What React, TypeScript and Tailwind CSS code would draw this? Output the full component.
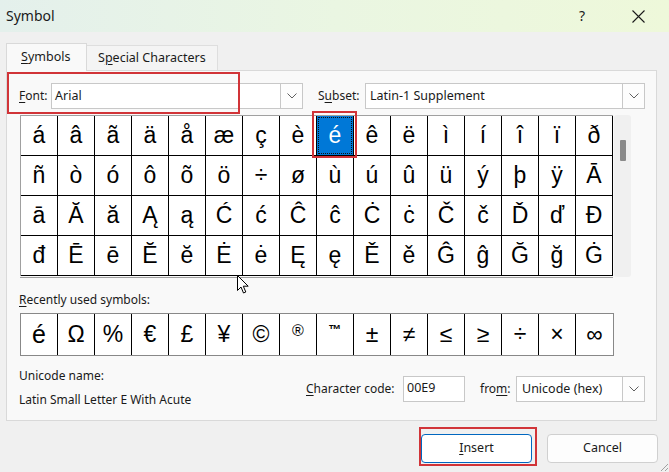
import React from "react";

const rows = [
  "áâãäåæçèéêëìíîïð",
  "ñòóôõö÷øùúûüýþÿĀ",
  "āĂăĄąĆćĈĉĊċČčĎďĐ",
  "đĒēĔĕĖėĘęĚěĜĝĞğĠ",
];

const recent = ["é", "Ω", "%", "€", "£", "¥", "©", "®", "™", "±", "≠", "≤", "≥", "÷", "×", "∞"];

function Chevron() {
  return (
    <svg width="10" height="6" viewBox="0 0 10 6">
      <path d="M0.5 0.5 L5 5 L9.5 0.5" fill="none" stroke="#606060" strokeWidth="1" />
    </svg>
  );
}

function DropBtn() {
  return (
    <div className="flex h-full w-[22px] items-center justify-center border-l border-[#c8c8c8] bg-[#fdfdfd]">
      <Chevron />
    </div>
  );
}

export default function App() {
  return (
    <div className="relative flex h-[472px] w-[669px] flex-col overflow-hidden bg-[#f0f0f0] font-[family-name:'Segoe_UI','Noto_Sans',sans-serif] text-[12px] text-[#1a1a1a]">
      {/* Title bar */}
      <div className="flex h-[32px] items-center bg-linear-to-r from-[#e4f0ec] via-[#eaf6e2] to-[#eef8da] pl-[6px]">
        <span className="text-[14px] leading-none">Symbol</span>
        <span className="ml-auto text-[14px] leading-none">?</span>
        <span className="ml-[47px] mr-[24px] flex items-center">
          <svg width="13" height="13" viewBox="0 0 13 13">
            <path d="M0.5 0.5 L12.5 12.5 M12.5 0.5 L0.5 12.5" stroke="#1a1a1a" strokeWidth="1.1" />
          </svg>
        </span>
      </div>

      {/* Tabs */}
      <div className="ml-[6px] mt-[11px] flex h-[27px] items-end">
        <div className="relative z-10 -mb-px flex h-[28px] w-[81px] items-center border border-b-0 border-[#d9d9d9] bg-[#f9f9f9] pl-[14px] text-[12.5px]">
          <span><span className="underline underline-offset-2">S</span>ymbols</span>
        </div>
        <div className="flex h-[25px] w-[131px] items-center border border-b-0 border-l-0 border-[#dedede] bg-[#f4f4f4] pl-[11px] text-[12.5px]">
          <span>S<span className="underline underline-offset-2">p</span>ecial Characters</span>
        </div>
      </div>

      {/* Panel */}
      <div className="ml-[6px] flex h-[351px] w-[651px] flex-col border border-[#d9d9d9] bg-[#f9f9f9]">
        {/* Font / Subset row */}
        <div className="relative mt-[12px] flex h-[26px] items-center">
          <div className="pointer-events-none absolute left-[0px] top-[-11px] h-[42px] w-[233px] border-2 border-[#d13438]" />
          <span className="ml-[12px] w-[32px]"><span className="underline underline-offset-2">F</span>ont:</span>
          <div className="flex h-[26px] w-[252px] items-center border border-[#c8c8c8] bg-white">
            <span className="flex-1 pl-[3px] text-[12.5px]">Arial</span>
            <DropBtn />
          </div>
          <span className="ml-[15px] w-[47px]">S<span className="underline underline-offset-2">u</span>bset:</span>
          <div className="flex h-[26px] w-[280px] items-center border border-[#c8c8c8] bg-white">
            <span className="flex-1 pl-[4px] text-[12.5px]">Latin-1 Supplement</span>
            <DropBtn />
          </div>
        </div>

        {/* Grid + scrollbar */}
        <div className="mt-[6px] flex">
          <div className="ml-[13px] flex flex-col">
            <div className="grid grid-cols-[repeat(16,37px)] border-l border-t border-[#a0a0a0]">
              {rows.map((r, ri) =>
                Array.from(r).map((ch, ci) => {
                  const sel = ri === 0 && ci === 8;
                  return (
                    <div
                      key={ri + "-" + ci}
                      className={
                        "relative flex h-[40px] items-center justify-center border-b border-r border-black font-[family-name:'Liberation_Sans',Arial,sans-serif] text-[23px] leading-none " +
                        (sel ? "z-10 bg-[#0078d7] text-white" : "bg-white text-black")
                      }
                    >
                      {sel && (
                        <>
                          <div className="pointer-events-none absolute inset-[1px] border border-dotted border-[#111]" />
                          <div className="pointer-events-none absolute -bottom-[3px] -left-[5px] -right-[4px] -top-[5px] border-2 border-[#d13438]" />
                        </>
                      )}
                      <span className="relative">{ch}</span>
                    </div>
                  );
                })
              )}
            </div>
            <div className="mt-px h-px w-[593px] bg-[#a0a0a0]" />
          </div>
          <div className="ml-[1px] flex h-[162px] w-[17px] justify-center rounded-[3px] bg-[#f0f0f0]">
            <div className="mt-[25px] h-[21px] w-[6px] rounded-[1px] bg-[#8a8a8a]" />
          </div>
        </div>

        {/* Recently used */}
        <div className="ml-[12px] mt-[14px] leading-[16px]">
          <span className="underline underline-offset-2">R</span>ecently used symbols:
        </div>
        <div className="ml-[13px] mt-[5px] flex h-[43px] w-[594px] border border-[#888888] bg-white">
          {recent.map((ch, i) => {
            const small = ch === "®" || ch === "™";
            return (
              <div
                key={i}
                className={
                  "flex w-[37px] justify-center font-[family-name:'Liberation_Sans',Arial,sans-serif] leading-none text-black " +
                  (i < 15 ? "border-r border-black " : "") +
                  (small ? "items-start pt-[9px] " : "items-center ") +
                  (ch === "®" ? "text-[16px]" : ch === "™" ? "text-[13px] font-bold" : i === 0 ? "text-[25px]" : "text-[23px]")
                }
              >
                {ch}
              </div>
            );
          })}
        </div>

        {/* Unicode name / character code */}
        <div className="mt-[12px] flex items-start">
          <div className="ml-[12px] flex w-[287px] flex-col leading-[16px]">
            <span>Unicode name:</span>
            <span className="mt-[8px]">Latin Small Letter E With Acute</span>
          </div>
          <div className="mt-[8px] flex h-[26px] items-center">
            <span className="w-[97px]"><span className="underline underline-offset-2">C</span>haracter code:</span>
            <div className="flex h-[26px] w-[62px] items-start border border-[#c8c8c8] bg-white pl-[3px] pt-[2px] text-[12.5px]">
              00E9
            </div>
            <span className="ml-[15px] w-[36px]">fro<span className="underline underline-offset-2">m</span>:</span>
            <div className="flex h-[26px] w-[129px] items-center border border-[#c8c8c8] bg-white">
              <span className="flex-1 pl-[5px] text-[12.5px]">Unicode (hex)</span>
              <DropBtn />
            </div>
          </div>
        </div>
      </div>

      {/* Buttons */}
      <div className="mt-[13px] flex justify-end pr-[11px]">
        <div className="relative flex h-[29px] w-[111px] items-center justify-center rounded-[4px] border border-[#0067c0] bg-white text-[12.5px]">
          <div className="pointer-events-none absolute -bottom-[4px] -left-[3px] -right-[6px] -top-[8px] border-2 border-[#d13438]" />
          <span><span className="underline underline-offset-2">I</span>nsert</span>
        </div>
        <div className="ml-[15px] flex h-[29px] w-[111px] items-center justify-center rounded-[4px] border border-[#d0d0d0] bg-[#fdfdfd] text-[12.5px]">
          Cancel
        </div>
      </div>

      {/* Resize grip */}
      <svg className="absolute bottom-0 right-0" width="10" height="10" viewBox="0 0 10 10">
        <path d="M9 2 L2 9 M9 6 L6 9" stroke="#a0a0a0" strokeWidth="1" />
      </svg>

      {/* Mouse cursor */}
      <svg className="pointer-events-none absolute left-[237px] top-[275px]" width="13" height="20" viewBox="0 0 13 20">
        <path d="M0.5 0.5 L0.5 15.5 L4 12 L6.5 18 L8.8 17 L6.3 11.2 L11.2 11.2 Z" fill="white" stroke="black" strokeWidth="1" strokeLinejoin="round" />
      </svg>
    </div>
  );
}
